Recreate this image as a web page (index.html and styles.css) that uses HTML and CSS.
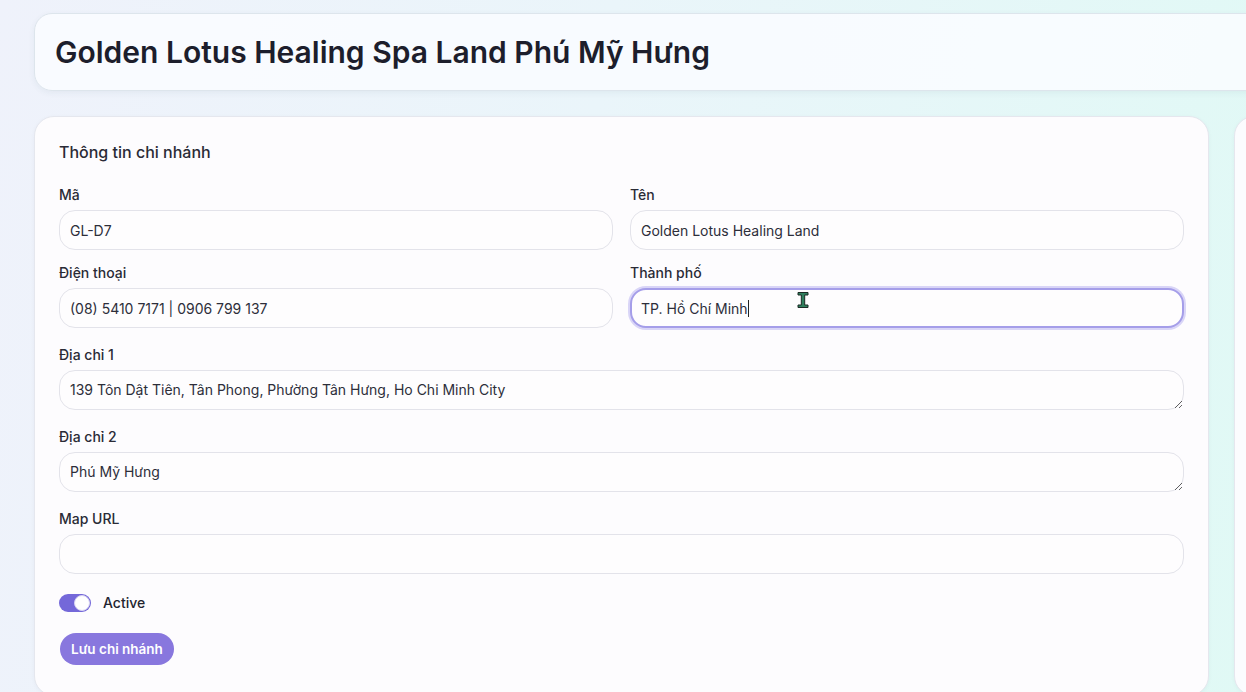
FILE: index.html
```html
<!DOCTYPE html>
<html lang="vi">
<head>
    <meta charset="UTF-8">
    <meta name="viewport" content="width=device-width, initial-scale=1.0">
    <title>Golden Lotus Healing Spa Land Phú Mỹ Hưng</title>
    <link rel="stylesheet" href="styles.css">
</head>
<body>
    <div class="page">
        <div class="title-card">
            <h1>Golden Lotus Healing Spa Land Phú Mỹ Hưng</h1>
        </div>

        <div class="columns">
            <form class="card branch-form">
                <h2>Thông tin chi nhánh</h2>

                <div class="grid">
                    <div class="field">
                        <label for="code">Mã</label>
                        <input type="text" id="code" value="GL-D7">
                    </div>
                    <div class="field">
                        <label for="name">Tên</label>
                        <input type="text" id="name" value="Golden Lotus Healing Land">
                    </div>
                    <div class="field">
                        <label for="phone">Điện thoại</label>
                        <input type="text" id="phone" value="(08) 5410 7171 | 0906 799 137">
                    </div>
                    <div class="field">
                        <label for="city">Thành phố</label>
                        <div class="focus-wrap">
                            <input type="text" id="city" class="is-focused" value="TP. Hồ Chí Minh">
                            <span class="caret"></span>
                        </div>
                    </div>
                </div>

                <div class="field">
                    <label for="address1">Địa chỉ 1</label>
                    <textarea id="address1" rows="1">139 Tôn Dật Tiên, Tân Phong, Phường Tân Hưng, Ho Chi Minh City</textarea>
                </div>

                <div class="field">
                    <label for="address2">Địa chỉ 2</label>
                    <textarea id="address2" rows="1">Phú Mỹ Hưng</textarea>
                </div>

                <div class="field">
                    <label for="mapUrl">Map URL</label>
                    <input type="text" id="mapUrl" value="">
                </div>

                <label class="switch-row">
                    <span class="switch"><span class="knob"></span></span>
                    <span>Active</span>
                </label>

                <div>
                    <button type="button" class="btn-save">Lưu chi nhánh</button>
                </div>
            </form>

            <div class="card side-card"></div>
        </div>
    </div>

    <!-- mouse pointer (text beam) -->
    <svg class="pointer" width="14" height="18" viewBox="0 0 14 18">
        <path d="M2 1.5h10v2.5h-3.3v10h3.3v2.5h-10v-2.5h3.3v-10h-3.3z" fill="#2f7f5d" stroke="#1b2a24" stroke-width="1"/>
    </svg>
</body>
</html>
```

FILE: styles.css
```css
* {
    box-sizing: border-box;
}

body {
    margin: 0;
    min-height: 100vh;
    overflow: hidden;
    font-family: Inter, "Noto Sans", Arial, sans-serif;
    color: #23242f;
    background: linear-gradient(100deg, #eff2fb 0%, #eaf5fa 45%, #e0f9f5 100%);
}

.page {
    width: 1600px;
    padding: 13px 0 0 34px;
}

.title-card {
    width: 1400px;
    height: 78px;
    display: flex;
    align-items: center;
    padding-left: 20px;
    background: rgba(250, 252, 255, 0.9);
    border: 1px solid #dde5ec;
    border-radius: 18px;
    box-shadow: 0 2px 6px rgba(30, 60, 90, 0.06);
}

h1 {
    margin: 0;
    font-size: 30px;
    font-weight: 600;
    color: #1d1e2c;
}

.columns {
    display: grid;
    grid-template-columns: 1175px 360px;
    gap: 25px;
    margin-top: 25px;
}

.card {
    background: #fdfcfe;
    border: 1px solid #e5e7ee;
    border-radius: 20px;
    box-shadow: 0 1px 4px rgba(30, 40, 80, 0.04);
}

.branch-form {
    display: flex;
    flex-direction: column;
    gap: 17px;
    padding: 24px;
    height: 580px;
}

.side-card {
    background: #fbfcfe;
}

h2 {
    margin: 0 0 5px;
    font-size: 16px;
    line-height: 22px;
    font-weight: 500;
    color: #2a2b36;
}

.grid {
    display: grid;
    grid-template-columns: 1fr 1fr;
    column-gap: 17px;
    row-gap: 13px;
}

.field {
    display: flex;
    flex-direction: column;
}

.field label {
    font-size: 14px;
    line-height: 20px;
    font-weight: 500;
    color: #2a2b36;
    margin-bottom: 5px;
}

input,
textarea {
    width: 100%;
    height: 40px;
    padding: 0 10px;
    font-family: Inter, "Noto Sans", Arial, sans-serif;
    font-size: 14px;
    color: #2d2e3a;
    background: #fefdfe;
    border: 1px solid #e3e3ea;
    border-radius: 16px;
    outline: none;
}

textarea {
    padding: 9px 10px;
    line-height: 19px;
    resize: vertical;
    display: block;
}

.focus-wrap {
    position: relative;
}

input.is-focused {
    border: 2px solid #a59ee9;
    padding: 0 9px;
    box-shadow: 0 0 0 2px #d9d5f7;
}

.caret {
    position: absolute;
    left: 118px;
    top: 12px;
    width: 1px;
    height: 17px;
    background: #222;
}

.switch-row {
    display: flex;
    align-items: center;
    gap: 12px;
    font-size: 14px;
    font-weight: 500;
    color: #23242f;
    margin-top: 3px;
    line-height: 18px;
}

.switch {
    width: 32px;
    height: 18px;
    border-radius: 9px;
    background: #7468d9;
    display: flex;
    align-items: center;
    justify-content: flex-end;
    padding: 0 1px;
}

.knob {
    width: 16px;
    height: 16px;
    border-radius: 50%;
    background: #fff;
    border: 1px solid #d8d4f2;
}

.btn-save {
    height: 32px;
    padding: 0 11px;
    margin-top: 4px;
    margin-left: 1px;
    font-family: Inter, "Noto Sans", Arial, sans-serif;
    font-size: 13.5px;
    font-weight: 600;
    color: #fff;
    background: #8877de;
    border: none;
    border-radius: 16px;
    cursor: pointer;
}

.pointer {
    position: absolute;
    left: 796px;
    top: 291px;
}
```
